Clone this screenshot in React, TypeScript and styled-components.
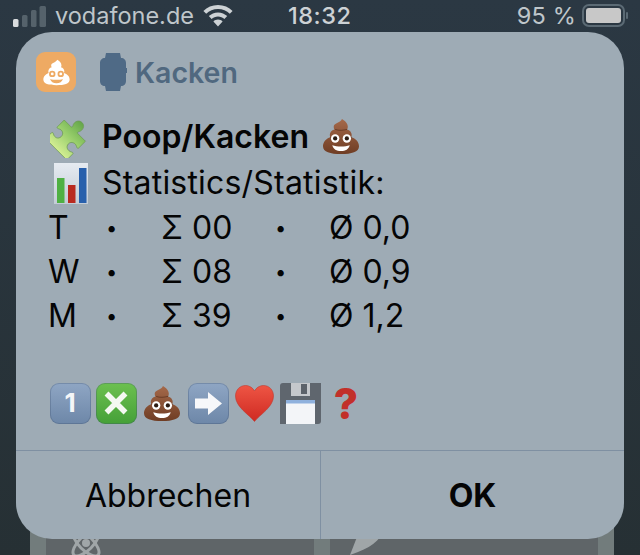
import React from 'react'
import styled, { createGlobalStyle } from 'styled-components'

const GlobalStyle = createGlobalStyle`
  html, body {
    margin: 0;
    padding: 0;
    width: 640px;
    height: 555px;
    overflow: hidden;
    background: #2a363f;
  }
`

const Page = styled.div`
  position: relative;
  width: 640px;
  height: 555px;
  overflow: hidden;
  background: linear-gradient(#2b3843, #263034);
  font-family: Inter, 'Liberation Sans', sans-serif;
  color: #050505;
`

const StatusBar = styled.div`
  display: grid;
  grid-template-columns: 275px 1fr auto;
  align-items: center;
  height: 32px;
  padding: 0 12px 0 13px;
  color: #bfc6ca;
  font-size: 23.5px;
  line-height: 32px;
  overflow: hidden;
`

const StatusGroup = styled.div`
  display: flex;
  align-items: center;
`

const Carrier = styled.span`
  margin: 0 9px 0 9px;
`

const Time = styled.span`
  font-weight: 500;
  letter-spacing: 0.5px;
  color: #cdd2d5;
`

const Percent = styled.span`
  margin-right: 6px;
  letter-spacing: 0.2px;
`

const BehindTiles = styled.div`
  display: flex;
  gap: 16px;
  margin: 468px 26px 0 30px;
  padding: 0 16px;
  height: 55px;
  background: #727c7c;
`

const Tile = styled.div<{ $inset: number }>`
  width: 268px;
  padding: 25px 0 0 ${p => p.$inset}px;
  box-sizing: border-box;
  background: #5f6568;
  color: #a0a6a8;
`

const Alert = styled.div`
  position: absolute;
  top: 32px;
  left: 16px;
  width: 608px;
  height: 507px;
  display: flex;
  flex-direction: column;
  border-radius: 36px;
  background: #9eabb5;
  overflow: hidden;
`

const AppHeader = styled.div`
  display: flex;
  align-items: center;
  height: 40px;
  margin: 20px 0 0 20px;
`

const AppName = styled.span`
  margin-left: 8px;
  color: #50687f;
  font-size: 28.5px;
  font-weight: 600;
`

const Message = styled.div`
  flex: 1;
  padding: 21px 0 0 32px;
  font-size: 32px;
  line-height: 44px;
`

const TitleLine = styled.div`
  display: flex;
  align-items: center;
  height: 47px;
  font-weight: 600;
`

const TextLine = styled.div`
  display: flex;
  align-items: center;
  height: 46px;
  letter-spacing: 0.2px;
`

const LeadIcon = styled.div<{ $left: number }>`
  display: flex;
  margin-left: ${p => p.$left}px;
`

const LineText = styled.span<{ $gap: number }>`
  display: flex;
  margin-left: ${p => p.$gap}px;
`

const StatGrid = styled.div`
  display: grid;
  grid-template-columns: 58px 55px 114px 54px auto;
  grid-auto-rows: 44px;
  align-items: center;
`

const StatDot = styled.span`
  font-size: 20px;
`

const EmojiRow = styled.div`
  display: grid;
  grid-template-columns: repeat(7, 46px);
  align-items: center;
  height: 42px;
  margin: 44px 0 0 -1px;
`

const EmojiCell = styled.div`
  display: flex;
  justify-content: center;
  align-items: center;
`

const ButtonRow = styled.div`
  display: grid;
  grid-template-columns: 304px 1fr;
  height: 88px;
  border-top: 1px solid #7f90a2;
`

const AlertButton = styled.div<{ $primary?: boolean }>`
  display: flex;
  align-items: center;
  justify-content: center;
  padding-top: 1px;
  font-size: 32px;
  font-weight: ${p => (p.$primary ? 700 : 400)};
  border-left: ${p => (p.$primary ? '1px solid #7f90a2' : 'none')};
`

const AppIconBox = styled.div`
  display: flex;
  align-items: center;
  justify-content: center;
  width: 40px;
  height: 40px;
  margin-right: 24px;
  border-radius: 9px;
  background: #eeaa63;
`

const KeycapBox = styled.div<{ $tone: string }>`
  display: flex;
  align-items: center;
  justify-content: center;
  width: 41px;
  height: 41px;
  border-radius: 9px;
  box-sizing: border-box;
  background: ${p => p.$tone};
  box-shadow: inset 0 0 0 1px rgba(60, 80, 110, 0.3);
`

const OneGlyph = styled.span`
  color: #f4f6f8;
  font-size: 26px;
  font-weight: 700;
`

const QuestionGlyph = styled.span`
  color: #c2302a;
  font-size: 42px;
  font-weight: 800;
  line-height: 41px;
`

const SignalIcon = () => (
  <svg width="33" height="21" viewBox="0 0 33 21">
    <rect x="0" y="13" width="5.500" height="8" rx="1.500" fill="#d9dcde" />
    <rect x="9" y="9" width="5.500" height="12" rx="1.500" fill="#55626b" />
    <rect x="18" y="4" width="5.500" height="17" rx="1.500" fill="#55626b" />
    <rect x="26.500" y="0" width="6.500" height="21" rx="1.500" fill="#55626b" />
  </svg>
)

const WifiIcon = () => (
  <svg width="30" height="22" viewBox="0 0 30 22" fill="#cdd2d5">
    <path d="M15 0C9.200 0 4.100 2.200 0.400 5.900L3.200 8.800C6.200 5.900 10.400 4.100 15 4.100s8.800 1.800 11.800 4.700l2.800-2.900C25.900 2.200 20.800 0 15 0z" />
    <path d="M15 7.400c-3.600 0-6.800 1.400-9.200 3.700l2.800 2.900c1.700-1.600 3.900-2.600 6.400-2.600s4.700 1 6.400 2.600l2.800-2.900C21.800 8.800 18.600 7.400 15 7.400z" />
    <path d="M15 14.600c-1.800 0-3.400.7-4.600 1.800L15 21.600l4.600-5.200c-1.200-1.100-2.800-1.800-4.600-1.800z" />
  </svg>
)

const BatteryIcon = () => (
  <svg width="46" height="24" viewBox="0 0 46 24">
    <rect x="1" y="1" width="41" height="21" rx="6" fill="none" stroke="#5b6a74" strokeWidth="2" />
    <rect x="4" y="4" width="35" height="15" rx="3" fill="#c8c8c8" />
    <rect x="44" y="8" width="2" height="7" rx="1" fill="#5b6a74" />
  </svg>
)

const AtomIcon = () => (
  <svg width="36" height="36" viewBox="0 0 36 36" fill="none" stroke="currentColor" strokeWidth="3">
    <ellipse cx="18" cy="18" rx="17" ry="7" transform="rotate(45 18 18)" />
    <ellipse cx="18" cy="18" rx="17" ry="7" transform="rotate(-45 18 18)" />
    <circle cx="18" cy="18" r="4" fill="currentColor" stroke="none" />
  </svg>
)

const RocketIcon = () => (
  <svg width="36" height="36" viewBox="0 0 36 36" fill="currentColor">
    <path d="M36 0C27 0 14 3 7 12L0 30l8-3C24 21 33 12 36 0z" />
  </svg>
)

const WatchIcon = () => (
  <svg width="27" height="38" viewBox="0 0 27 38" fill="#4f6a86">
    <path d="M6 0h14l1 5c3 0 5 2 5 5v5h1v5h-1v8c0 3-2 5-5 5l-1 5H6l-1-5c-3 0-5-2-5-5V10c0-3 2-5 5-5z" />
  </svg>
)

const poopPath =
  'M20 1c3 2 6 4 6 8 0 1-.3 2-.8 2.700 3 .8 4.800 3 4.800 5.800 0 .8-.2 1.500-.5 2.200C34 21 37.500 24.500 37.500 29c0 6-7.500 8-18.500 8S.5 35 .5 29c0-4.500 3.500-8 7.500-9.300-.3-.7-.5-1.400-.5-2.200 0-2.800 1.800-5 4.800-5.800-.6-.8-.8-1.700-.8-2.700C11.500 5 18 5.500 20 1z'

const WhitePoop = () => (
  <svg width="27" height="27" viewBox="0 0 38 38">
    <path fill="#fff" d={poopPath} />
    <circle cx="13" cy="21" r="4.500" fill="#eeaa63" />
    <circle cx="25" cy="21" r="4.500" fill="#eeaa63" />
    <circle cx="13" cy="21" r="2" fill="#fff" />
    <circle cx="25" cy="21" r="2" fill="#fff" />
    <path d="M10 28c5 1.800 13 1.800 18 0-1 4-4.500 6-9 6s-8-2-9-6z" fill="#eeaa63" />
  </svg>
)

const PoopEmoji = () => (
  <svg width="38" height="37" viewBox="0 0 38 38">
    <defs>
      <linearGradient id="poop" x1="0" y1="0" x2="0" y2="1">
        <stop offset="0" stopColor="#a5694a" />
        <stop offset="1" stopColor="#6f3d24" />
      </linearGradient>
    </defs>
    <path fill="url(#poop)" d={poopPath} />
    <path d="M13 11.700c4 1.500 8 1 12.200 0M8 19.700c1 .5 2 .8 3 1M30 19.700c-1 .5-2 .8-3 1" fill="none" stroke="#5e3320" strokeWidth="0.8" />
    <circle cx="13" cy="21" r="4.300" fill="#fff" />
    <circle cx="25" cy="21" r="4.300" fill="#fff" />
    <circle cx="13" cy="21" r="2.200" fill="#2a1a12" />
    <circle cx="25" cy="21" r="2.200" fill="#2a1a12" />
    <path d="M10 28c5 1.800 13 1.800 18 0-1 4-4.500 6-9 6s-8-2-9-6z" fill="#fff" />
  </svg>
)

const PuzzleEmoji = () => (
  <svg width="42" height="42" viewBox="0 0 42 42">
    <defs>
      <linearGradient id="puzzle" x1="0" y1="1" x2="0" y2="0">
        <stop offset="0" stopColor="#d3ee92" />
        <stop offset="0.55" stopColor="#93cb68" />
        <stop offset="1" stopColor="#64a649" />
      </linearGradient>
    </defs>
    <g transform="translate(21 21) scale(1.2) rotate(45) translate(-17 -18)">
      <path
        fill="url(#puzzle)"
        stroke="#6d9a55"
        strokeWidth="0.6"
        d="M3 12h8c1 0 1-1 .4-2-1.600-2.500-.4-7 3.600-7s5.200 4.500 3.600 7c-.6 1-.6 2 .4 2h9v8c0 1-1 1-2 .4-2.500-1.600-6.500-.4-6.500 3.100s4 4.700 6.500 3.100c1-.6 2-.6 2 .4v7H3v-7c0-1 1-1 2-.4 2.500 1.600 6 .4 6-3.100s-3.500-4.700-6-3.100c-1 .6-2 .6-2-.4z"
      />
    </g>
  </svg>
)

const ChartEmoji = () => (
  <svg width="34" height="41" viewBox="0 0 34 41">
    <defs>
      <linearGradient id="chartBack" x1="0" y1="0" x2="0" y2="1">
        <stop offset="0" stopColor="#e6ebf1" />
        <stop offset="1" stopColor="#c3ccd6" />
      </linearGradient>
    </defs>
    <rect width="34" height="41" fill="url(#chartBack)" />
    <rect x="3" y="15" width="7.500" height="25" fill="#4fb043" />
    <rect x="14" y="22" width="7.500" height="18" fill="#b92a20" />
    <rect x="25" y="5" width="7.500" height="35" fill="#2860ac" />
  </svg>
)

const CrossIcon = () => (
  <svg width="24" height="24" viewBox="0 0 24 24" stroke="#f4f8f1" strokeWidth="5.500">
    <path d="M2.500 2.500l19 19M21.500 2.500l-19 19" />
  </svg>
)

const ArrowIcon = () => (
  <svg width="27" height="23" viewBox="0 0 27 23" fill="#f7f8fa">
    <path d="M0 6.500h13V0l14 11.500L13 23v-6.500H0z" />
  </svg>
)

const HeartEmoji = () => (
  <svg width="39" height="37" viewBox="0 0 39 37">
    <defs>
      <linearGradient id="heart" x1="0" y1="0" x2="0" y2="1">
        <stop offset="0" stopColor="#ee5544" />
        <stop offset="1" stopColor="#cf2a22" />
      </linearGradient>
    </defs>
    <path
      fill="url(#heart)"
      stroke="#c03a30"
      strokeWidth="0.6"
      d="M19.500 36.500C14 29.500 .5 22 .5 11 .5 4.800 5 .5 10.500 .5c4 0 7.300 2.300 9 5.500 1.700-3.200 5-5.500 9-5.500 5.500 0 10 4.300 10 10.500 0 11-13.500 18.500-19 25.500z"
    />
  </svg>
)

const FloppyEmoji = () => (
  <svg width="41" height="41" viewBox="0 0 41 41">
    <path d="M3 0h38v38a3 3 0 0 1-3 3H0V3a3 3 0 0 1 3-3z" fill="#5f666e" />
    <rect x="11" y="0" width="19" height="13" fill="#c5c8cc" />
    <rect x="21" y="1" width="6" height="10" fill="#5c626a" />
    <rect x="6" y="17" width="29" height="24" fill="#f3f5f8" />
    <rect x="6" y="17" width="29" height="3.500" fill="#8fb1dd" />
  </svg>
)

const stats = [
  { label: 'T', sum: '00', avg: '0,0' },
  { label: 'W', sum: '08', avg: '0,9' },
  { label: 'M', sum: '39', avg: '1,2' },
]

export default function App() {
  return (
    <Page>
      <GlobalStyle />
      <StatusBar>
        <StatusGroup>
          <SignalIcon />
          <Carrier>vodafone.de</Carrier>
          <WifiIcon />
        </StatusGroup>
        <Time>18:32</Time>
        <StatusGroup>
          <Percent>95 %</Percent>
          <BatteryIcon />
        </StatusGroup>
      </StatusBar>
      <BehindTiles>
        <Tile $inset={22}>
          <AtomIcon />
        </Tile>
        <Tile $inset={20}>
          <RocketIcon />
        </Tile>
      </BehindTiles>
      <Alert>
        <AppHeader>
          <AppIconBox>
            <WhitePoop />
          </AppIconBox>
          <WatchIcon />
          <AppName>Kacken</AppName>
        </AppHeader>
        <Message>
          <TitleLine>
            <LeadIcon $left={2}>
              <PuzzleEmoji />
            </LeadIcon>
            <LineText $gap={10}>Poop/Kacken</LineText>
            <LineText $gap={13}>
              <PoopEmoji />
            </LineText>
          </TitleLine>
          <TextLine>
            <LeadIcon $left={6}>
              <ChartEmoji />
            </LeadIcon>
            <LineText $gap={14}>Statistics/Statistik:</LineText>
          </TextLine>
          <StatGrid>
            {stats.map(row => (
              <React.Fragment key={row.label}>
                <span>{row.label}</span>
                <StatDot>•</StatDot>
                <span>Σ {row.sum}</span>
                <StatDot>•</StatDot>
                <span>Ø {row.avg}</span>
              </React.Fragment>
            ))}
          </StatGrid>
          <EmojiRow>
            <EmojiCell>
              <KeycapBox $tone="linear-gradient(#8fa6c4, #6d87a8)">
                <OneGlyph>1</OneGlyph>
              </KeycapBox>
            </EmojiCell>
            <EmojiCell>
              <KeycapBox $tone="linear-gradient(#6cc04f, #45a038)">
                <CrossIcon />
              </KeycapBox>
            </EmojiCell>
            <EmojiCell>
              <PoopEmoji />
            </EmojiCell>
            <EmojiCell>
              <KeycapBox $tone="linear-gradient(#8fa6c4, #6d87a8)">
                <ArrowIcon />
              </KeycapBox>
            </EmojiCell>
            <EmojiCell>
              <HeartEmoji />
            </EmojiCell>
            <EmojiCell>
              <FloppyEmoji />
            </EmojiCell>
            <EmojiCell>
              <QuestionGlyph>?</QuestionGlyph>
            </EmojiCell>
          </EmojiRow>
        </Message>
        <ButtonRow>
          <AlertButton>Abbrechen</AlertButton>
          <AlertButton $primary>OK</AlertButton>
        </ButtonRow>
      </Alert>
    </Page>
  )
}
